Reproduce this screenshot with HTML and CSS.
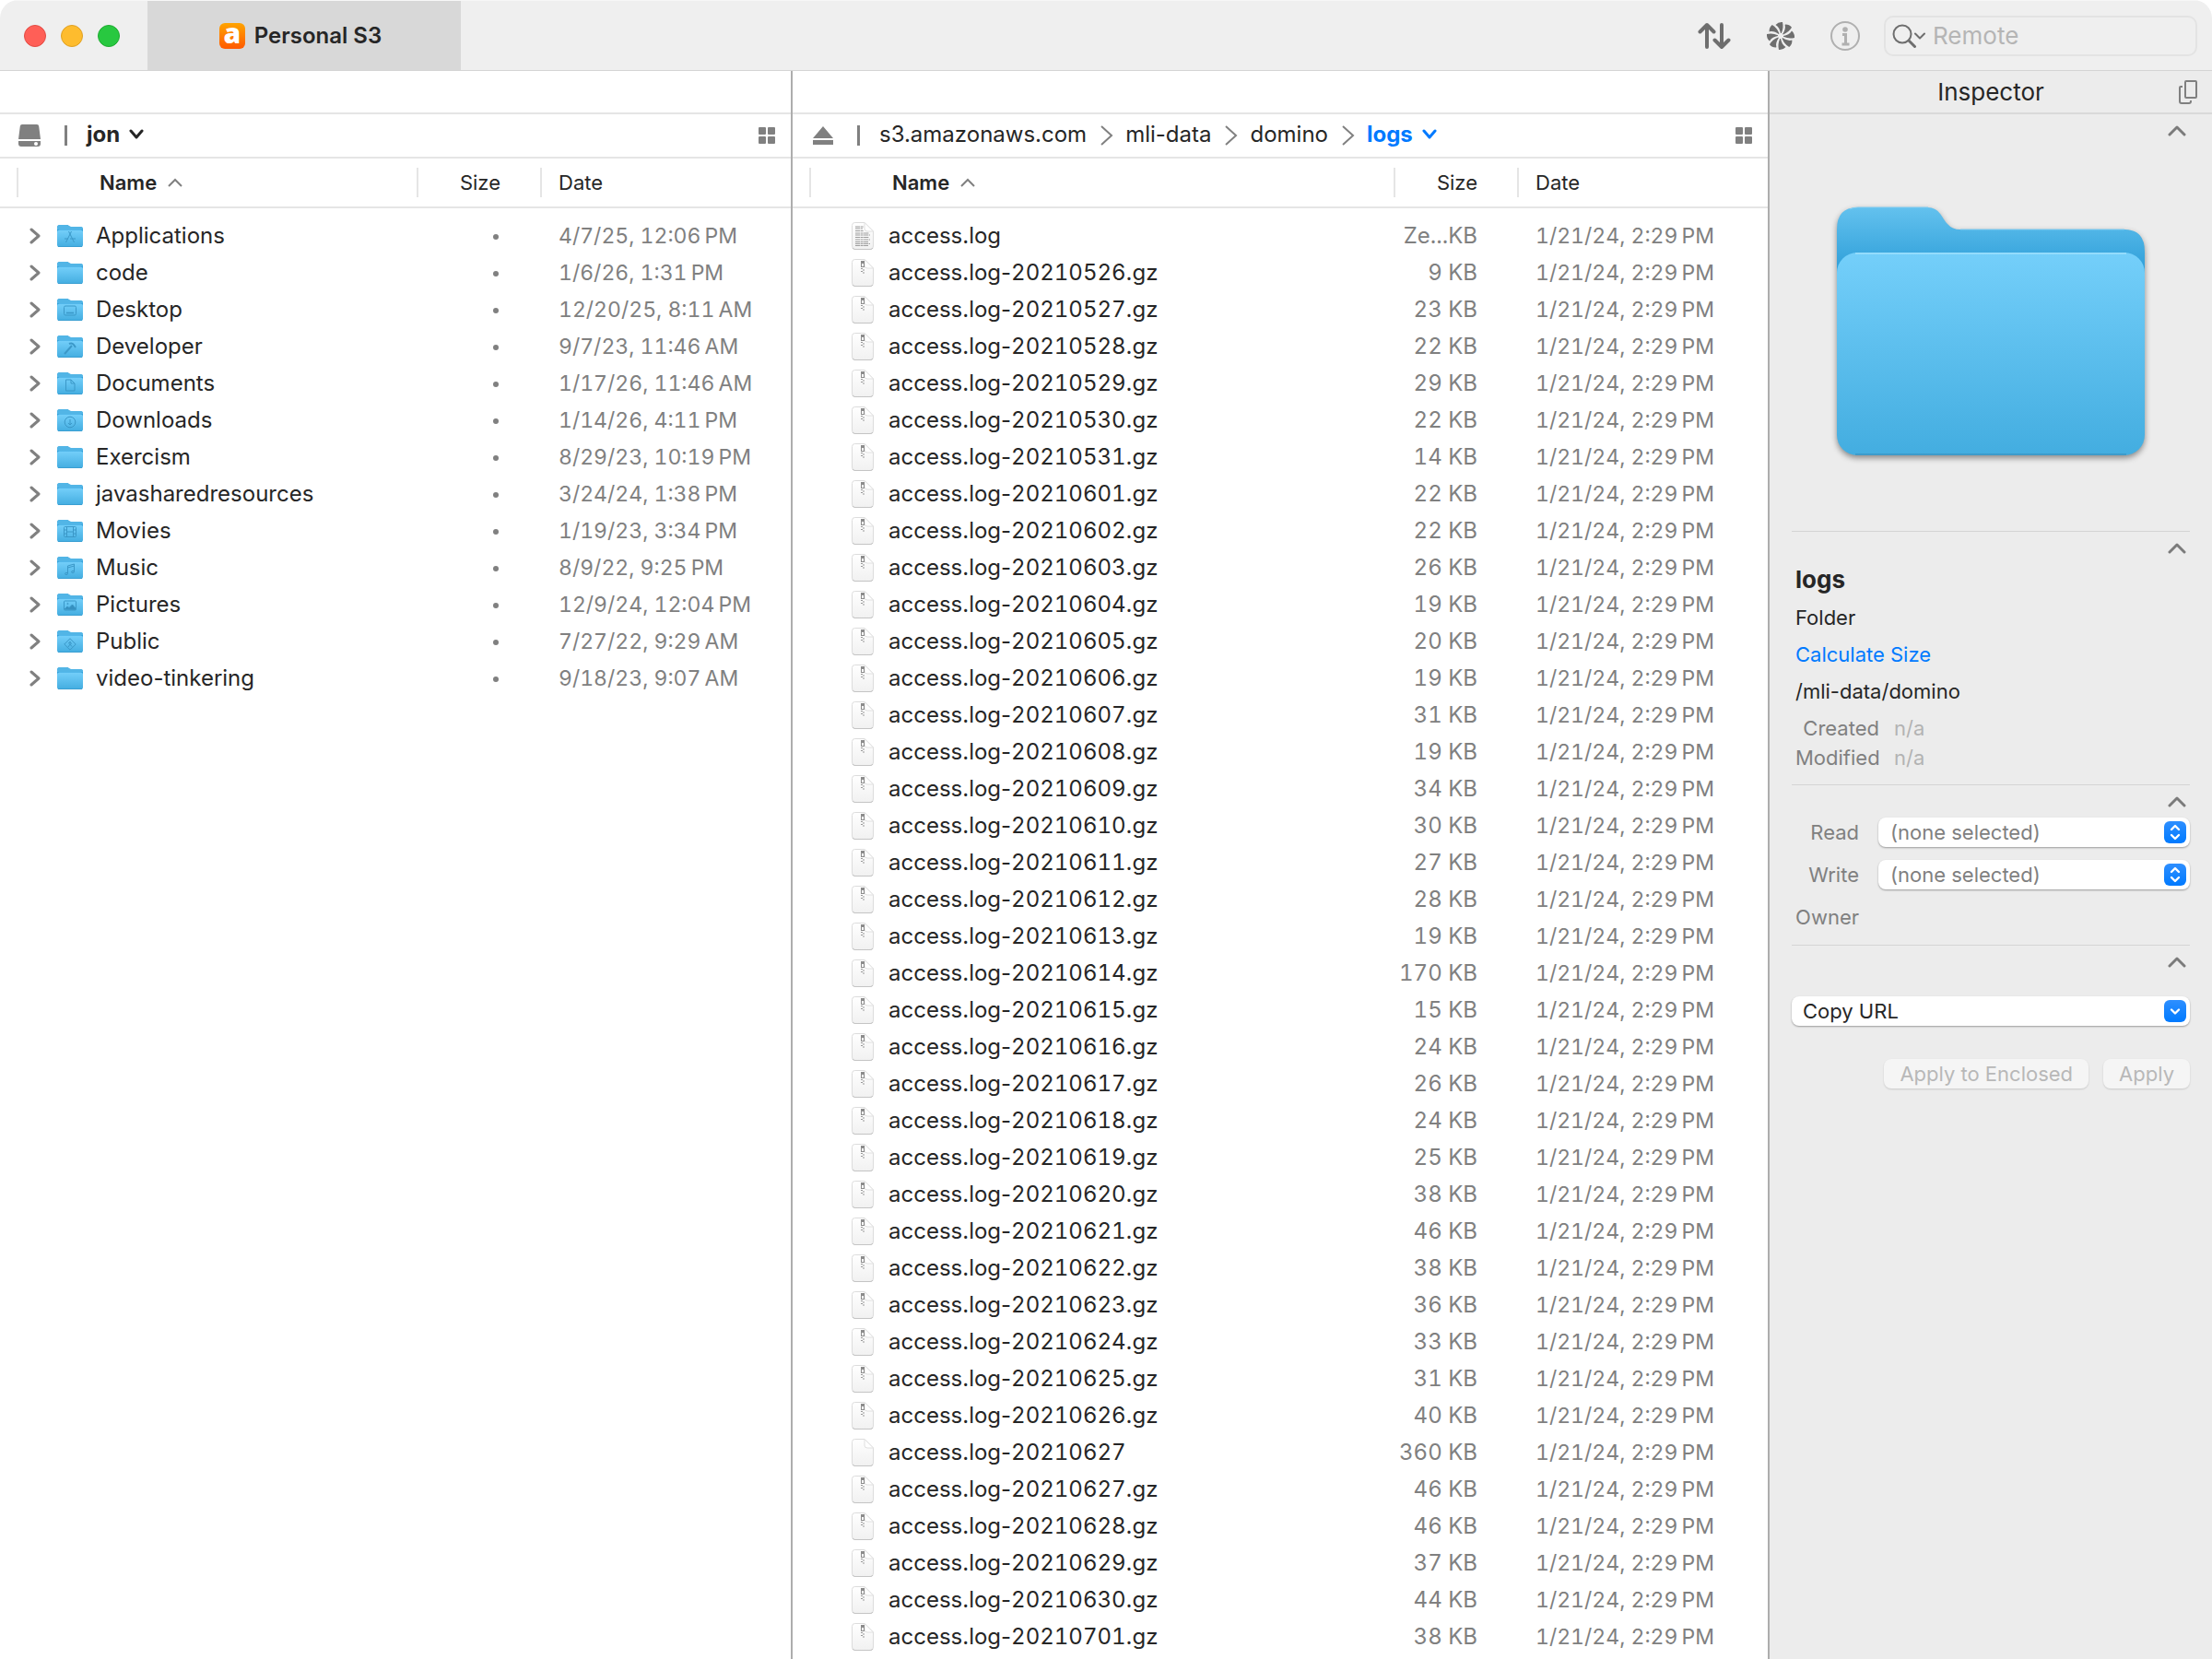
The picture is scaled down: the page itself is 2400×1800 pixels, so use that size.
FILE: index.html
```html
<!DOCTYPE html>
<html lang="en">
<head>
<meta charset="utf-8">
<title>Personal S3</title>
<link rel="stylesheet" href="styles.css">
</head>
<body>
<svg class="defs" aria-hidden="true">
  <defs>
    <linearGradient id="front" x1="0" y1="0" x2="0" y2="1"><stop offset="0" stop-color="#74cffa"/><stop offset="1" stop-color="#43ade0"/></linearGradient>
    <linearGradient id="back" x1="0" y1="0" x2="0" y2="1"><stop offset="0" stop-color="#63c1ee"/><stop offset="1" stop-color="#2c9dd8"/></linearGradient>
    <linearGradient id="paper" x1="0" y1="0" x2="0" y2="1"><stop offset="0" stop-color="#ffffff"/><stop offset="1" stop-color="#f1f1f1"/></linearGradient>
    <symbol id="folder" viewBox="0 0 28 25">
      <path d="M0 22V3q0-3 3-3h7q2 0 3 1.200q1 .8 2 .8h10q3 0 3 3v12z" fill="#2f9fda"/>
      <path d="M0 3q0-3 3-3h7q2 0 3 1.200q1 .8 2 .8h10q3 0 3 2v1H0z" fill="#52b5e6"/>
      <rect y="5.500" width="28" height="18.500" rx="2.500" fill="url(#front)"/>
      <path d="M1 23.500h26" stroke="#3a9fd2"/>
    </symbol>
    <symbol id="doc" viewBox="0 0 24 30">
      <path d="M.5 3.500q0-3 3-3H14l9.500 9.500v16q0 3.500-3 3.500h-17q-3 0-3-3.500z" fill="url(#paper)" stroke="#dcdcdc"/>
      <path d="M1 28q1 1.500 3 1.500h16q2.500 0 3-1.500" fill="none" stroke="#c4c4c4"/>
      <path d="M14 .5v6.500q0 3 3 3h6.500z" fill="#fff" stroke="#e0e0e0"/>
    </symbol>
    <symbol id="zip" viewBox="0 0 24 30">
      <use href="#doc"/>
      <rect x="10" y="2" width="4" height="7" fill="#8c8c8c"/><rect x="11" y="5" width="2" height="3" fill="#fff"/>
      <path d="M10 10.500h2M12 12h2M10 13.500h2M12 15h2" stroke="#999"/>
    </symbol>
    <symbol id="log" viewBox="0 0 24 30">
      <use href="#doc"/>
      <path d="M4 5h9M4 7h8M4 9.500h9M4 12h15M4 14h16M4 16.500h15M4 19h16M4 21.500h14M4 23.500h16M4 25.500h14" stroke="#9c9c9c" stroke-dasharray="5 .6 3 .5"/>
    </symbol>
    <symbol id="right" viewBox="0 0 12 18"><path d="M2 2l8 7-8 7" fill="none" stroke="currentColor" stroke-width="3" stroke-linecap="round" stroke-linejoin="round"/></symbol>
    <symbol id="crumb" viewBox="0 0 14 22"><path d="M1 1l11 10L1 21" fill="none" stroke="currentColor" stroke-width="2"/></symbol>
    <symbol id="up" viewBox="0 0 20 12"><path d="M2 10l8-8 8 8" fill="none" stroke="currentColor" stroke-width="3" stroke-linecap="round" stroke-linejoin="round"/></symbol>
    <symbol id="down" viewBox="0 0 16 12"><path d="M2 2l6 7 6-7" fill="none" stroke="currentColor" stroke-width="3" stroke-linecap="round" stroke-linejoin="round"/></symbol>
    <symbol id="grid" viewBox="0 0 18 18"><path d="M1 0h6q1 0 1 1v6q0 1-1 1H1q-1 0-1-1V1q0-1 1-1zM11 0h6q1 0 1 1v6q0 1-1 1h-6q-1 0-1-1V1q0-1 1-1zM1 10h6q1 0 1 1v6q0 1-1 1H1q-1 0-1-1v-6q0-1 1-1zM11 10h6q1 0 1 1v6q0 1-1 1h-6q-1 0-1-1v-6q0-1 1-1z" fill="currentColor"/></symbol>
    <symbol id="updown" viewBox="0 0 24 24"><path d="M8 9l4-4 4 4M8 15l4 4 4-4" fill="none" stroke="#fff" stroke-width="2.400" stroke-linecap="round" stroke-linejoin="round"/></symbol>
    <symbol id="pull" viewBox="0 0 24 24"><path d="M8 10.500l4 4 4-4" fill="none" stroke="#fff" stroke-width="2.400" stroke-linecap="round" stroke-linejoin="round"/></symbol>
    <path id="blade" d="M0-3C-1-7-2-10-5.500-12Q-2.500-15.500 2-15Q3.500-9 .8-3z"/>
    <symbol id="g-app" viewBox="0 0 14 14"><path d="M5.500 1l6 12M8.500 1l-6 12M1 9h4M7 9h6"/></symbol>
    <symbol id="g-desk" viewBox="0 0 14 14"><rect x=".5" y="2" width="13" height="10" rx="1.500"/><path d="M3 9.500h8" stroke-width="1.500"/></symbol>
    <symbol id="g-dev" viewBox="0 0 14 14"><path d="M1 13l8-9" stroke-width="2"/><path d="M6 2q3-1.500 5 1l2 3" stroke-width="2"/></symbol>
    <symbol id="g-doc" viewBox="0 0 14 14"><path d="M2.500 1h5.500l4 4v8h-9.500zM8 1v4h4"/></symbol>
    <symbol id="g-down" viewBox="0 0 14 14"><circle cx="7" cy="7" r="5.800"/><path d="M7 4v6M5 8l2 2 2-2"/></symbol>
    <symbol id="g-film" viewBox="0 0 14 14"><rect x=".5" y="1.500" width="13" height="11" rx="1"/><path d="M3.500 2v10M10.500 2v10M3.500 7h7M1 5h2M1 9h2M11 5h2M11 9h2"/></symbol>
    <symbol id="g-music" viewBox="0 0 14 14"><path d="M4.500 11V3l7-2v8M4.500 5l7-2"/><ellipse cx="3" cy="11.500" rx="1.500" ry="1"/><ellipse cx="10" cy="9.500" rx="1.500" ry="1"/></symbol>
    <symbol id="g-pic" viewBox="0 0 14 14"><rect x=".5" y="2" width="13" height="10" rx="1"/><path d="M1 11l3-3 2 1.500L9.500 6l3.500 4v1.500z" fill="#3590c0"/><circle cx="4.500" cy="5" r=".6"/></symbol>
    <symbol id="g-pub" viewBox="0 0 14 14"><path d="M7 .8L13.200 7 7 13.200.8 7zM7 3.500v3.500l-2 3M7 7l2 2.500M5 6l2-1 2 1.500"/></symbol>
  </defs>
</svg>

<div class="window">
  <header class="toolbar">
    <div class="lights">
      <button class="light close" aria-label="Close"></button>
      <button class="light minimize" aria-label="Minimize"></button>
      <button class="light zoom" aria-label="Zoom"></button>
    </div>
    <button class="tab"><span class="logo" aria-hidden="true">a</span>Personal S3</button>
    <div class="tools">
      <button class="tool" aria-label="Transfers">
        <svg width="36" height="30" viewBox="0 0 36 30" fill="none" stroke="#6e6e6e" stroke-width="4" stroke-linecap="round" stroke-linejoin="round"><path d="M10 27V3M2.500 10.500L10 3l7.500 7.500M26 3v24M18.500 19.500L26 27l7.500-7.500"/></svg>
      </button>
      <button class="tool" aria-label="Sync">
        <svg width="32" height="32" viewBox="-16 -16 32 32" fill="#6e6e6e"><use href="#blade"/><use href="#blade" transform="rotate(45)"/><use href="#blade" transform="rotate(90)"/><use href="#blade" transform="rotate(135)"/><use href="#blade" transform="rotate(180)"/><use href="#blade" transform="rotate(225)"/><use href="#blade" transform="rotate(270)"/><use href="#blade" transform="rotate(315)"/></svg>
      </button>
      <button class="tool" aria-label="Get info">
        <svg width="32" height="32" viewBox="0 0 32 32"><circle cx="16" cy="16" r="15" fill="none" stroke="#b0b0b0" stroke-width="2"/><circle cx="16" cy="9" r="2.800" fill="#b0b0b0"/><path d="M13 14.500h3.500V25M12.500 25h8" fill="none" stroke="#b0b0b0" stroke-width="3"/></svg>
      </button>
      <label class="search">
        <svg width="36" height="26" viewBox="0 0 36 26" fill="none" stroke="#6e6e6e" stroke-linecap="round" stroke-linejoin="round"><circle cx="11" cy="11" r="9.500" stroke-width="2"/><path d="M18 18l6.500 6.500" stroke-width="3"/><path d="M25 10.500l5 5 5-5" stroke-width="2"/></svg>
        <input type="search" placeholder="Remote" aria-label="Search remote">
      </label>
    </div>
  </header>

  <main class="panes">
    <section class="pane">
      <div class="strip"></div>
      <nav class="path">
        <svg class="place" width="24" height="24" viewBox="0 0 24 24" fill="#808080"><path d="M4 0h16q2 0 2.200 2L24 16H0L1.800 2Q2 0 4 0z"/><path d="M0 18h24v3q0 3-3 3H3q-3 0-3-3z"/><circle cx="19" cy="21" r="2" fill="#fff"/></svg>
        <span class="bar"></span>
        <a class="here" href="#">jon <svg width="16" height="12"><use href="#down"/></svg></a>
        <button class="view" aria-label="Icon view"><svg width="18" height="18"><use href="#grid"/></svg></button>
      </nav>
      <table class="files">
        <colgroup><col><col class="c-size"><col class="c-date"></colgroup>
        <thead><tr><th class="h-name"><div>Name <svg width="16" height="10" viewBox="0 0 16 10"><path d="M1 9l7-7 7 7" fill="none" stroke="#808080" stroke-width="2"/></svg></div></th><th class="size"><div>Size</div></th><th class="date"><div>Date</div></th></tr></thead>
        <tbody>
          <tr><td><div class="item folder"><svg class="open"><use href="#right"/></svg><svg class="icon"><use href="#folder"/><use class="glyph" href="#g-app" x="7" y="6" width="14" height="14"/></svg>Applications</div></td><td class="size"><i class="dot"></i></td><td class="date">4/7/25, 12:06&#8239;PM</td></tr>
          <tr><td><div class="item folder"><svg class="open"><use href="#right"/></svg><svg class="icon"><use href="#folder"/></svg>code</div></td><td class="size"><i class="dot"></i></td><td class="date">1/6/26, 1:31&#8239;PM</td></tr>
          <tr><td><div class="item folder"><svg class="open"><use href="#right"/></svg><svg class="icon"><use href="#folder"/><use class="glyph" href="#g-desk" x="7" y="6" width="14" height="14"/></svg>Desktop</div></td><td class="size"><i class="dot"></i></td><td class="date">12/20/25, 8:11&#8239;AM</td></tr>
          <tr><td><div class="item folder"><svg class="open"><use href="#right"/></svg><svg class="icon"><use href="#folder"/><use class="glyph" href="#g-dev" x="7" y="7" width="14" height="14"/></svg>Developer</div></td><td class="size"><i class="dot"></i></td><td class="date">9/7/23, 11:46&#8239;AM</td></tr>
          <tr><td><div class="item folder"><svg class="open"><use href="#right"/></svg><svg class="icon"><use href="#folder"/><use class="glyph" href="#g-doc" x="7" y="7" width="14" height="14"/></svg>Documents</div></td><td class="size"><i class="dot"></i></td><td class="date">1/17/26, 11:46&#8239;AM</td></tr>
          <tr><td><div class="item folder"><svg class="open"><use href="#right"/></svg><svg class="icon"><use href="#folder"/><use class="glyph" href="#g-down" x="7" y="7" width="14" height="14"/></svg>Downloads</div></td><td class="size"><i class="dot"></i></td><td class="date">1/14/26, 4:11&#8239;PM</td></tr>
          <tr><td><div class="item folder"><svg class="open"><use href="#right"/></svg><svg class="icon"><use href="#folder"/></svg>Exercism</div></td><td class="size"><i class="dot"></i></td><td class="date">8/29/23, 10:19&#8239;PM</td></tr>
          <tr><td><div class="item folder"><svg class="open"><use href="#right"/></svg><svg class="icon"><use href="#folder"/></svg>javasharedresources</div></td><td class="size"><i class="dot"></i></td><td class="date">3/24/24, 1:38&#8239;PM</td></tr>
          <tr><td><div class="item folder"><svg class="open"><use href="#right"/></svg><svg class="icon"><use href="#folder"/><use class="glyph" href="#g-film" x="7" y="6" width="14" height="14"/></svg>Movies</div></td><td class="size"><i class="dot"></i></td><td class="date">1/19/23, 3:34&#8239;PM</td></tr>
          <tr><td><div class="item folder"><svg class="open"><use href="#right"/></svg><svg class="icon"><use href="#folder"/><use class="glyph" href="#g-music" x="7" y="7" width="14" height="14"/></svg>Music</div></td><td class="size"><i class="dot"></i></td><td class="date">8/9/22, 9:25&#8239;PM</td></tr>
          <tr><td><div class="item folder"><svg class="open"><use href="#right"/></svg><svg class="icon"><use href="#folder"/><use class="glyph" href="#g-pic" x="7" y="6" width="14" height="14"/></svg>Pictures</div></td><td class="size"><i class="dot"></i></td><td class="date">12/9/24, 12:04&#8239;PM</td></tr>
          <tr><td><div class="item folder"><svg class="open"><use href="#right"/></svg><svg class="icon"><use href="#folder"/><use class="glyph" href="#g-pub" x="7" y="8" width="14" height="14"/></svg>Public</div></td><td class="size"><i class="dot"></i></td><td class="date">7/27/22, 9:29&#8239;AM</td></tr>
          <tr><td><div class="item folder"><svg class="open"><use href="#right"/></svg><svg class="icon"><use href="#folder"/></svg>video-tinkering</div></td><td class="size"><i class="dot"></i></td><td class="date">9/18/23, 9:07&#8239;AM</td></tr>
        </tbody>
      </table>
    </section>

    <section class="pane">
      <div class="strip"></div>
      <nav class="path remote">
        <svg class="place" width="22" height="20" viewBox="0 0 22 20" fill="#808080"><path d="M11 0l11 13H0zM0 15h22v5H0z"/></svg>
        <span class="bar"></span>
        <a href="#">s3.amazonaws.com</a><svg class="sep" width="14" height="22"><use href="#crumb"/></svg>
        <a href="#">mli-data</a><svg class="sep" width="14" height="22"><use href="#crumb"/></svg>
        <a href="#">domino</a><svg class="sep" width="14" height="22"><use href="#crumb"/></svg>
        <a class="here active" href="#">logs <svg width="16" height="12"><use href="#down"/></svg></a>
        <button class="view" aria-label="Icon view"><svg width="18" height="18"><use href="#grid"/></svg></button>
      </nav>
      <table class="files">
        <colgroup><col><col class="c-size"><col class="c-date"></colgroup>
        <thead><tr><th class="h-name"><div>Name <svg width="16" height="10" viewBox="0 0 16 10"><path d="M1 9l7-7 7 7" fill="none" stroke="#808080" stroke-width="2"/></svg></div></th><th class="size"><div>Size</div></th><th class="date"><div>Date</div></th></tr></thead>
        <tbody>
          <tr><td><div class="item file"><svg><use href="#log"/></svg>access.log</div></td><td class="size">Ze...KB</td><td class="date">1/21/24, 2:29&#8239;PM</td></tr>
          <tr><td><div class="item file"><svg><use href="#zip"/></svg>access.log-<b>20210526</b>.gz</div></td><td class="size">9 KB</td><td class="date">1/21/24, 2:29&#8239;PM</td></tr>
          <tr><td><div class="item file"><svg><use href="#zip"/></svg>access.log-<b>20210527</b>.gz</div></td><td class="size">23 KB</td><td class="date">1/21/24, 2:29&#8239;PM</td></tr>
          <tr><td><div class="item file"><svg><use href="#zip"/></svg>access.log-<b>20210528</b>.gz</div></td><td class="size">22 KB</td><td class="date">1/21/24, 2:29&#8239;PM</td></tr>
          <tr><td><div class="item file"><svg><use href="#zip"/></svg>access.log-<b>20210529</b>.gz</div></td><td class="size">29 KB</td><td class="date">1/21/24, 2:29&#8239;PM</td></tr>
          <tr><td><div class="item file"><svg><use href="#zip"/></svg>access.log-<b>20210530</b>.gz</div></td><td class="size">22 KB</td><td class="date">1/21/24, 2:29&#8239;PM</td></tr>
          <tr><td><div class="item file"><svg><use href="#zip"/></svg>access.log-<b>20210531</b>.gz</div></td><td class="size">14 KB</td><td class="date">1/21/24, 2:29&#8239;PM</td></tr>
          <tr><td><div class="item file"><svg><use href="#zip"/></svg>access.log-<b>20210601</b>.gz</div></td><td class="size">22 KB</td><td class="date">1/21/24, 2:29&#8239;PM</td></tr>
          <tr><td><div class="item file"><svg><use href="#zip"/></svg>access.log-<b>20210602</b>.gz</div></td><td class="size">22 KB</td><td class="date">1/21/24, 2:29&#8239;PM</td></tr>
          <tr><td><div class="item file"><svg><use href="#zip"/></svg>access.log-<b>20210603</b>.gz</div></td><td class="size">26 KB</td><td class="date">1/21/24, 2:29&#8239;PM</td></tr>
          <tr><td><div class="item file"><svg><use href="#zip"/></svg>access.log-<b>20210604</b>.gz</div></td><td class="size">19 KB</td><td class="date">1/21/24, 2:29&#8239;PM</td></tr>
          <tr><td><div class="item file"><svg><use href="#zip"/></svg>access.log-<b>20210605</b>.gz</div></td><td class="size">20 KB</td><td class="date">1/21/24, 2:29&#8239;PM</td></tr>
          <tr><td><div class="item file"><svg><use href="#zip"/></svg>access.log-<b>20210606</b>.gz</div></td><td class="size">19 KB</td><td class="date">1/21/24, 2:29&#8239;PM</td></tr>
          <tr><td><div class="item file"><svg><use href="#zip"/></svg>access.log-<b>20210607</b>.gz</div></td><td class="size">31 KB</td><td class="date">1/21/24, 2:29&#8239;PM</td></tr>
          <tr><td><div class="item file"><svg><use href="#zip"/></svg>access.log-<b>20210608</b>.gz</div></td><td class="size">19 KB</td><td class="date">1/21/24, 2:29&#8239;PM</td></tr>
          <tr><td><div class="item file"><svg><use href="#zip"/></svg>access.log-<b>20210609</b>.gz</div></td><td class="size">34 KB</td><td class="date">1/21/24, 2:29&#8239;PM</td></tr>
          <tr><td><div class="item file"><svg><use href="#zip"/></svg>access.log-<b>20210610</b>.gz</div></td><td class="size">30 KB</td><td class="date">1/21/24, 2:29&#8239;PM</td></tr>
          <tr><td><div class="item file"><svg><use href="#zip"/></svg>access.log-<b>20210611</b>.gz</div></td><td class="size">27 KB</td><td class="date">1/21/24, 2:29&#8239;PM</td></tr>
          <tr><td><div class="item file"><svg><use href="#zip"/></svg>access.log-<b>20210612</b>.gz</div></td><td class="size">28 KB</td><td class="date">1/21/24, 2:29&#8239;PM</td></tr>
          <tr><td><div class="item file"><svg><use href="#zip"/></svg>access.log-<b>20210613</b>.gz</div></td><td class="size">19 KB</td><td class="date">1/21/24, 2:29&#8239;PM</td></tr>
          <tr><td><div class="item file"><svg><use href="#zip"/></svg>access.log-<b>20210614</b>.gz</div></td><td class="size">170 KB</td><td class="date">1/21/24, 2:29&#8239;PM</td></tr>
          <tr><td><div class="item file"><svg><use href="#zip"/></svg>access.log-<b>20210615</b>.gz</div></td><td class="size">15 KB</td><td class="date">1/21/24, 2:29&#8239;PM</td></tr>
          <tr><td><div class="item file"><svg><use href="#zip"/></svg>access.log-<b>20210616</b>.gz</div></td><td class="size">24 KB</td><td class="date">1/21/24, 2:29&#8239;PM</td></tr>
          <tr><td><div class="item file"><svg><use href="#zip"/></svg>access.log-<b>20210617</b>.gz</div></td><td class="size">26 KB</td><td class="date">1/21/24, 2:29&#8239;PM</td></tr>
          <tr><td><div class="item file"><svg><use href="#zip"/></svg>access.log-<b>20210618</b>.gz</div></td><td class="size">24 KB</td><td class="date">1/21/24, 2:29&#8239;PM</td></tr>
          <tr><td><div class="item file"><svg><use href="#zip"/></svg>access.log-<b>20210619</b>.gz</div></td><td class="size">25 KB</td><td class="date">1/21/24, 2:29&#8239;PM</td></tr>
          <tr><td><div class="item file"><svg><use href="#zip"/></svg>access.log-<b>20210620</b>.gz</div></td><td class="size">38 KB</td><td class="date">1/21/24, 2:29&#8239;PM</td></tr>
          <tr><td><div class="item file"><svg><use href="#zip"/></svg>access.log-<b>20210621</b>.gz</div></td><td class="size">46 KB</td><td class="date">1/21/24, 2:29&#8239;PM</td></tr>
          <tr><td><div class="item file"><svg><use href="#zip"/></svg>access.log-<b>20210622</b>.gz</div></td><td class="size">38 KB</td><td class="date">1/21/24, 2:29&#8239;PM</td></tr>
          <tr><td><div class="item file"><svg><use href="#zip"/></svg>access.log-<b>20210623</b>.gz</div></td><td class="size">36 KB</td><td class="date">1/21/24, 2:29&#8239;PM</td></tr>
          <tr><td><div class="item file"><svg><use href="#zip"/></svg>access.log-<b>20210624</b>.gz</div></td><td class="size">33 KB</td><td class="date">1/21/24, 2:29&#8239;PM</td></tr>
          <tr><td><div class="item file"><svg><use href="#zip"/></svg>access.log-<b>20210625</b>.gz</div></td><td class="size">31 KB</td><td class="date">1/21/24, 2:29&#8239;PM</td></tr>
          <tr><td><div class="item file"><svg><use href="#zip"/></svg>access.log-<b>20210626</b>.gz</div></td><td class="size">40 KB</td><td class="date">1/21/24, 2:29&#8239;PM</td></tr>
          <tr><td><div class="item file"><svg><use href="#doc"/></svg>access.log-<b>20210627</b></div></td><td class="size">360 KB</td><td class="date">1/21/24, 2:29&#8239;PM</td></tr>
          <tr><td><div class="item file"><svg><use href="#zip"/></svg>access.log-<b>20210627</b>.gz</div></td><td class="size">46 KB</td><td class="date">1/21/24, 2:29&#8239;PM</td></tr>
          <tr><td><div class="item file"><svg><use href="#zip"/></svg>access.log-<b>20210628</b>.gz</div></td><td class="size">46 KB</td><td class="date">1/21/24, 2:29&#8239;PM</td></tr>
          <tr><td><div class="item file"><svg><use href="#zip"/></svg>access.log-<b>20210629</b>.gz</div></td><td class="size">37 KB</td><td class="date">1/21/24, 2:29&#8239;PM</td></tr>
          <tr><td><div class="item file"><svg><use href="#zip"/></svg>access.log-<b>20210630</b>.gz</div></td><td class="size">44 KB</td><td class="date">1/21/24, 2:29&#8239;PM</td></tr>
          <tr><td><div class="item file"><svg><use href="#zip"/></svg>access.log-<b>20210701</b>.gz</div></td><td class="size">38 KB</td><td class="date">1/21/24, 2:29&#8239;PM</td></tr>
        </tbody>
      </table>
    </section>

    <aside class="inspector">
      <div class="title"><h2>Inspector</h2>
        <button class="copy" aria-label="Detach inspector"><svg width="20" height="26" viewBox="0 0 20 26" fill="none" stroke="#808080" stroke-width="2"><rect x="7" y="1" width="12" height="18" rx="1"/><path d="M4 7H2q-1 0-1 1v15q0 2 2 2h8q2 0 2-2v-1"/></svg></button>
      </div>
      <section class="group preview">
        <button class="fold" aria-label="Collapse preview"><svg width="20" height="12"><use href="#up"/></svg></button>
        <svg class="big" width="350" height="286" viewBox="0 0 350 286">
          <path d="M8 80V32q0-24 22-24h76c14 0 16 12 22 18q5 6 14 6h178q22 0 22 24v24z" fill="url(#back)"/>
          <path d="M22 10q4-2 9-2h76M142 32h178" stroke="#7dcdf3" fill="none"/>
          <rect x="8" y="57" width="334" height="220" rx="22" fill="url(#front)"/>
          <path d="M28 58h294" stroke="#93dcfc" stroke-width="2"/><path d="M28 276h294" stroke="#3c9bcb" stroke-width="2"/>
        </svg>
      </section>
      <section class="group about">
        <button class="fold" aria-label="Collapse details"><svg width="20" height="12"><use href="#up"/></svg></button>
        <h3>logs</h3>
        <p>Folder</p>
        <p><a href="#">Calculate Size</a></p>
        <p>/mli-data/domino</p>
        <dl><dt>Created</dt><dd>n/a</dd><dt>Modified</dt><dd>n/a</dd></dl>
      </section>
      <section class="group perms">
        <button class="fold" aria-label="Collapse permissions"><svg width="20" height="12"><use href="#up"/></svg></button>
        <div class="field"><label for="read">Read</label><div class="select"><select id="read"><option>(none selected)</option></select><svg><use href="#updown"/></svg></div></div>
        <div class="field"><label for="write">Write</label><div class="select"><select id="write"><option>(none selected)</option></select><svg><use href="#updown"/></svg></div></div>
        <div class="field"><span class="label">Owner</span></div>
      </section>
      <section class="group actions">
        <button class="fold" aria-label="Collapse actions"><svg width="20" height="12"><use href="#up"/></svg></button>
        <div class="select dark"><select aria-label="Copy URL"><option>Copy URL</option></select><svg><use href="#pull"/></svg></div>
        <div class="buttons"><button class="push" disabled>Apply to Enclosed</button><button class="push" disabled>Apply</button></div>
      </section>
    </aside>
  </main>
</div>
</body>
</html>
```
FILE: styles.css
```css
* { box-sizing: border-box; }
body { margin: 0; background: #fff; color: #262626; font: 24px/40px Inter, "Liberation Sans", sans-serif; }
button { padding: 0; border: 0; background: none; color: inherit; font: inherit; }
a { color: inherit; text-decoration: none; }
h2, h3, p, dl, dd { margin: 0; }
svg { display: block; flex: none; }
.defs { position: absolute; width: 0; height: 0; }

.window { display: flex; flex-direction: column; height: 100vh; overflow: hidden; border-radius: 20px 20px 0 0; }

.toolbar { display: flex; flex: none; height: 77px; background: #efefef; border-top: 1px solid #f7f7f7; border-bottom: 1px solid #d4d4d4; }
.lights { display: flex; align-items: center; gap: 16px; width: 160px; padding-left: 26px; }
.light { width: 24px; height: 24px; border: 1px solid; border-radius: 50%; }
.close { background: #ff5f57; border-color: #e24b44; }
.minimize { background: #febc2e; border-color: #dfa023; }
.zoom { background: #28c840; border-color: #1eab30; }
.tab { display: flex; align-items: center; justify-content: center; gap: 10px; width: 340px; padding-right: 8px; background: #d8d8d8; font-weight: 600; }
.logo { width: 28px; height: 28px; border-radius: 6px; background: linear-gradient(#ffa400, #ff5a00); color: #fff; font: 800 30px/22px "Open Sans", sans-serif; text-align: center; }
.tools { display: flex; align-items: center; margin-left: auto; padding-right: 16px; }
.tool { margin-right: 38px; }
.tool:nth-child(3) { margin-right: 26px; }
.search { display: flex; align-items: center; gap: 8px; width: 340px; height: 44px; padding-left: 7px; border: 2px solid #e3e3e3; border-radius: 10px; }
.search input { flex: 1; min-width: 0; padding: 0; border: 0; outline: 0; background: none; font: inherit; font-size: 26px; }
.search input::placeholder { color: #b5b5b5; opacity: 1; }

.panes { display: grid; grid-template-columns: 860fr 1060fr 480px; flex: 1; min-height: 0; }
.pane { min-width: 0; overflow: hidden; border-right: 2px solid #adadad; }
.strip { height: 47px; border-bottom: 2px solid #e5e5e5; }
.path { display: flex; align-items: center; height: 48px; padding: 0 17px 0 20px; border-bottom: 2px solid #e5e5e5; }
.path.remote { padding-left: 22px; }
.place + .bar { width: 3px; height: 22px; margin: 0 21px 0 26px; background: #808080; }
.sep { margin: 0 13px 0 15px; color: #808080; }
.path a { padding-bottom: 2px; }
.here { display: flex; align-items: center; gap: 10px; font-weight: 700; }
.active { color: #007aff; }
.view { margin-left: auto; color: #808080; }

.files { width: 100%; table-layout: fixed; border-collapse: separate; border-spacing: 0; }
.c-size { width: 134px; }
.c-date { width: 272px; }
th, td { padding: 0; text-align: left; font-weight: 400; white-space: nowrap; }
th { height: 54px; border-bottom: 2px solid #e5e5e5; font-size: 22px; line-height: 32px; }
th div { border-left: 2px solid #e5e5e5; }
.h-name div { display: flex; align-items: center; gap: 12px; margin-left: 18px; padding-left: 88px; font-weight: 600; }
tbody::before { content: ""; display: block; height: 10px; }
td { height: 40px; }
td.size, td.date { font-variant-numeric: tabular-nums; color: #808080; }
td.date { font-size: 23px; }
.size { padding-right: 43px; text-align: right; }
.date { padding-left: 20px; }
th.size, th.date { padding: 0; }
th.size div { padding-right: 43px; }
th.date div { padding-left: 18px; }
.item { display: flex; align-items: center; }
.item b { font-weight: 400; font-variant-numeric: tabular-nums; }
.folder { padding-left: 32px; }
.open { width: 12px; height: 18px; margin-right: 18px; color: #808080; }
.icon { width: 28px; height: 25px; margin-right: 14px; }
.glyph { fill: none; stroke: #3b98c8; stroke-width: 1; }
.file { padding-left: 64px; }
.file svg { width: 24px; height: 30px; margin-right: 16px; }
.dot { display: inline-block; width: 6px; height: 6px; margin-right: 2px; border-radius: 50%; background: #808080; vertical-align: middle; }

.inspector { background: #ececec; font-size: 22px; }
.title { display: flex; align-items: center; height: 47px; padding: 0 16px; border-bottom: 2px solid #d9d9d9; }
.title h2 { flex: 1; padding-left: 20px; font-size: 26px; font-weight: 400; text-align: center; }
.group { margin: 0 24px; border-top: 1px solid #d4d4d4; }
.fold { display: block; height: 12px; margin: 12px 4px 0 auto; color: #7b7b7b; }
.preview { border-top: 0; padding-bottom: 73px; }
.big { margin: 69px auto 0; filter: drop-shadow(0 3px 3px #0000006b); }
.about { padding: 0 4px 13px; }
.about .fold { margin-right: 0; }
.about h3 { margin-top: 7px; font-size: 26px; line-height: 42px; font-weight: 700; }
.about a { color: #007aff; }
.about dl { display: grid; grid-template-columns: 91px 1fr; column-gap: 16px; line-height: 32px; margin-top: 4px; }
.about dt { color: #808080; text-align: right; }
.about dd { color: #b3b3b3; }
.perms { padding-bottom: 7px; }
.perms .fold { margin-bottom: 4px; }
.field { display: flex; align-items: center; gap: 21px; height: 46px; color: #808080; }
.field label, .label { width: 73px; text-align: right; }
.select { position: relative; flex: 1; height: 32px; }
.select select { display: block; width: 100%; height: 32px; padding: 0 40px 0 13px; border: 0; border-radius: 8px; background: #fff; box-shadow: 0 1px 2px #00000059; color: #808080; font: inherit; line-height: 32px; appearance: none; }
.select svg { position: absolute; top: 4px; right: 4px; width: 24px; height: 24px; border-radius: 6px; background: linear-gradient(#2e8fff, #007aff); pointer-events: none; }
.dark { margin-top: 31px; }
.select.dark select { padding-left: 12px; color: #262626; }
.buttons { display: flex; justify-content: flex-end; gap: 16px; margin-top: 36px; }
.push { height: 32px; padding: 0 17px; border-radius: 8px; background: #f5f5f5; box-shadow: 0 1px 2px #00000026; color: #b8b8b8; line-height: 32px; }
```
